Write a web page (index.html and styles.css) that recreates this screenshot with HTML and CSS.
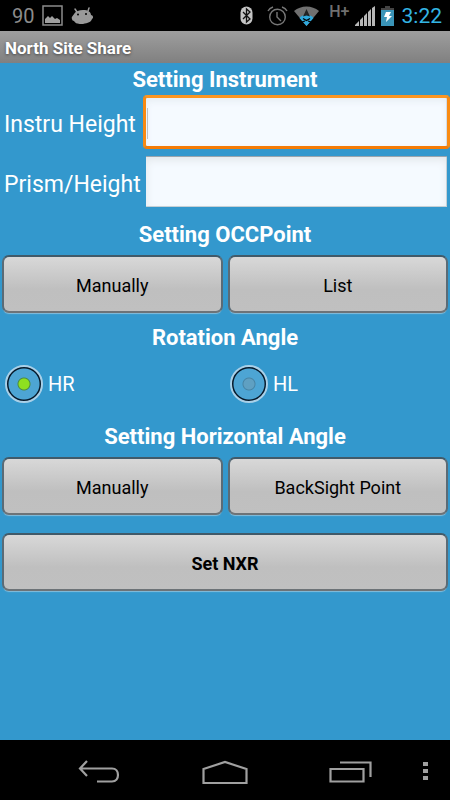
FILE: index.html
```html
<!DOCTYPE html>
<html lang="en">
	<head>
		<meta charset="UTF-8">
		<meta name="viewport" content="width=device-width, initial-scale=1">
		<title>North Site Share</title>
		<link rel="stylesheet" href="styles.css">
	</head>
	<body>
		<div class="statusbar">
			<span class="count">90</span>
			<svg class="icon-image" width="21" height="21" viewBox="0 0 21 21">
				<path d="M1 1h19v19H1z" fill="none" stroke="#8c8c8c" stroke-width="1.5"/>
				<path d="M3 18v-4l3-3 2 2 2-2 3 3 2-1 3 2v3z" fill="#a0a0a0"/>
			</svg>
			<svg class="icon-droid" width="23" height="18" viewBox="0 0 23 18">
				<path d="M4 2l2 3M18 1l-1 3" stroke="#999" stroke-width="1.5" stroke-linecap="round"/>
				<path d="M1 12C0 10 2 9 3 7c2-3 5-4 9-4 5 0 8 2 8 5 2 0 3 3 1 4-1 3-4 4-9 5-5 0-7 0-9-3-1 0-2-1-2-2z" fill="#999"/>
				<circle cx="7" cy="7.500" r="1" fill="#000"/>
				<circle cx="15" cy="7" r="1" fill="#000"/>
			</svg>
			<span class="spacer"></span>
			<svg class="icon-bluetooth" width="13" height="19" viewBox="0 0 13 19">
				<rect x="0.500" y="0.500" width="12" height="18" rx="6" fill="#c4c4c4"/>
				<path d="M3 6l7 7-3.500 3V3L10 6l-7 7" fill="none" stroke="#111" stroke-width="1.300"/>
			</svg>
			<svg class="icon-alarm" width="21" height="20" viewBox="0 0 21 20">
				<g fill="none" stroke="#777" stroke-width="1.400">
					<circle cx="10.500" cy="11" r="7.800"/>
					<path d="M10 6v5l4 4M1 5c1-2 2-3 5-4M20 5c-1-2-2-3-5-4"/>
				</g>
			</svg>
			<svg class="icon-wifi" width="25" height="20" viewBox="0 0 25 20">
				<path d="M0 5C7-1 18-1 25 5L12.500 20z" fill="#707070"/>
				<path d="M5.500 12c1-2 4-3 7-3s6 1 7 3l-7 8z" fill="#2fa9dd"/>
				<path d="M12.500 3L9 10.500l3.500-1 3.500 1z" fill="#222"/>
				<path d="M9 12.500l3.500 2 3.500-2M8 16l3-1M17 16l-3-1" fill="none" stroke="#000" stroke-width="1.300"/>
			</svg>
			<span class="network">H+</span>
			<svg class="icon-signal" width="20" height="20" viewBox="0 0 20 20">
				<path d="M0 20v-1l4-4v5zM5 20v-6l3-3v9zM9 20v-10l3-3v13zM13 20V6l3-3v17zM17 20V2l3-2v20z" fill="#b8b8b8"/>
			</svg>
			<svg class="icon-battery" width="13" height="20" viewBox="0 0 13 20">
				<path d="M4 0h5v2h4v3H0V2h4z" fill="#444"/>
				<path d="M0 4h13v16H0z" fill="#3a94b8"/>
				<path d="M5 6h5L8 10h3l-6 6 1-5H3z" fill="#fff"/>
			</svg>
			<span class="clock">3:22</span>
		</div>

		<header class="titlebar">North Site Share</header>

		<main class="content">
			<h2>Setting Instrument</h2>
			<div class="fields">
				<label for="instru">Instru Height</label>
				<input type="text" id="instru" class="field active">
				<label for="prism">Prism/Height</label>
				<input type="text" id="prism" class="field">
			</div>

			<h2>Setting OCCPoint</h2>
			<div class="pair">
				<button type="button" class="btn">Manually</button>
				<button type="button" class="btn">List</button>
			</div>

			<h2>Rotation Angle</h2>
			<div class="radios">
				<label><input type="radio" name="rotation" checked>HR</label>
				<label><input type="radio" name="rotation">HL</label>
			</div>

			<h2>Setting Horizontal Angle</h2>
			<div class="pair">
				<button type="button" class="btn">Manually</button>
				<button type="button" class="btn">BackSight Point</button>
			</div>
			<button type="button" class="btn btn-set">Set NXR</button>
		</main>

		<nav class="navbar">
			<button type="button" aria-label="Back">
				<svg width="42" height="24" viewBox="0 0 42 24">
					<path d="M9 1L2 8.500 9 16M2 8.500h32c8 0 8 13 0 13H19" fill="none" stroke="#a0a0a0" stroke-width="2.200"/>
				</svg>
			</button>
			<button type="button" aria-label="Home">
				<svg width="46" height="25" viewBox="0 0 46 25">
					<path d="M1.500 9L23 2l21.500 7v14h-43z" fill="none" stroke="#a0a0a0" stroke-width="2.200"/>
				</svg>
			</button>
			<button type="button" aria-label="Recent apps">
				<svg width="44" height="22" viewBox="0 0 44 22">
					<path d="M1.500 8h33v12.500h-33zM11 1.500h30.500V16" fill="none" stroke="#a0a0a0" stroke-width="2.200"/>
				</svg>
			</button>
			<button type="button" class="more" aria-label="Menu">
				<svg width="5" height="18" viewBox="0 0 5 18">
					<path d="M0 0h5v4H0zM0 7h5v4H0zM0 14h5v4H0z" fill="#a0a0a0"/>
				</svg>
			</button>
		</nav>
	</body>
</html>
```
FILE: styles.css
```css
*{
	box-sizing: border-box;
}
body{
	margin: 0;
	min-height: 100vh;
	display: flex;
	flex-direction: column;
	background-color: #3398cd;
	color: #fff;
	font-family: Roboto, "Liberation Sans", sans-serif;
}
button, input{
	font-family: inherit;
	margin: 0;
}
svg{
	display: block;
}

/* status bar */
.statusbar{
	display: flex;
	align-items: center;
	height: 31px;
	padding: 0 8px 0 12px;
	background-color: #000;
}
.count{
	margin-right: 8px;
	color: #8c8c8c;
	font-size: 20px;
}
.icon-droid{
	margin-left: 8px;
}
.spacer{
	flex: 1;
}
.icon-alarm{
	margin-left: 14px;
}
.icon-wifi{
	margin-left: 6px;
}
.network{
	align-self: flex-start;
	margin: 2px 5px 0 10px;
	color: #707070;
	font-size: 16px;
	font-weight: 500;
	line-height: 19px;
}
.icon-battery{
	margin: 0 8px 0 6px;
}
.clock{
	color: #33b5e5;
	font-size: 21px;
}

.titlebar{
	height: 32px;
	padding-left: 5px;
	background-image: linear-gradient(#9e9e9e, #808080);
	font-size: 17px;
	font-weight: bold;
	line-height: 34px;
	text-shadow: 0 1px 3px #444;
}

/* form */
.content{
	flex: 1;
}
h2{
	margin: 0;
	font-size: 22px;
	font-weight: bold;
	line-height: 34px;
	text-align: center;
}
.fields{
	display: grid;
	grid-template-columns: auto 1fr;
	grid-template-rows: 54px 57px;
	align-items: center;
	gap: 4px 2px;
	margin: -2px 0 8px;
	padding-left: 4px;
}
.fields label{
	padding-top: 6px;
	font-size: 23px;
	line-height: 28px;
}
.field{
	width: 100%;
	height: 100%;
	padding: 0 4px;
	border: 3px solid transparent;
	outline: none;
	background-color: #f5faff;
	background-clip: padding-box;
	box-shadow: inset 0 1px 0 #9aa5ad, inset -1px -1px 0 #c5d0d6, inset 0 4px 8px #e2e7ea;
	color: #222;
	font-size: 22px;
}
.active{
	border-color: #fc9520 #f98a12 #f57c06;
	border-radius: 4px;
	background-image: linear-gradient(#aaa, #aaa);
	background-position: 1px 10px;
	background-repeat: no-repeat;
	background-size: 1px 31px;
	box-shadow: inset -1px 0 0 #d5dbe4, inset 0 3px 7px #e6edf3;
}
.pair{
	display: grid;
	grid-template-columns: 1fr 1fr;
	gap: 5px;
	margin: 3px 2px 8px;
}
.btn{
	height: 58px;
	padding: 2px 0 0;
	border: 2px solid;
	border-color: #415a69 #5a6b76 #6d7377;
	border-radius: 7px;
	background-image: linear-gradient(#d8d8d8, #bfbfbf 60%, #c0c0c0);
	box-shadow: 0 2px 1px -1px #85bddb;
	color: #000;
	font-size: 18px;
}
.btn-set{
	display: block;
	width: calc(100% - 4px);
	margin: 18px 2px 0;
	font-weight: bold;
}
.radios{
	display: grid;
	grid-template-columns: 1fr 1fr;
	padding: 10px 0 17px;
}
.radios label{
	display: flex;
	align-items: center;
	gap: 5px;
	padding-left: 5px;
	font-size: 20px;
}
.radios input{
	appearance: none;
	width: 38px;
	height: 38px;
	border: 2px solid #a9d0e8;
	border-radius: 50%;
	background-image: radial-gradient(circle, #5fa0c2 5px, #4684a5 6px, #4da5d4 7px, #4da5d4 15px, #06192a 16px);
}
.radios input:checked{
	background-image: radial-gradient(circle, #8ee01f 5px, #4c8b42 6px, #4da5d4 7px, #4da5d4 15px, #06192a 16px);
}

/* bottom navigation */
.navbar{
	display: grid;
	grid-template-columns: 1fr 1fr 1fr;
	align-items: center;
	position: relative;
	height: 60px;
	padding: 4px 36px 0;
	background-color: #000;
}
.navbar button{
	display: flex;
	justify-content: center;
	padding: 0;
	border: 0;
	background: none;
}
.navbar .more{
	position: absolute;
	top: 22px;
	right: 22px;
}
```
